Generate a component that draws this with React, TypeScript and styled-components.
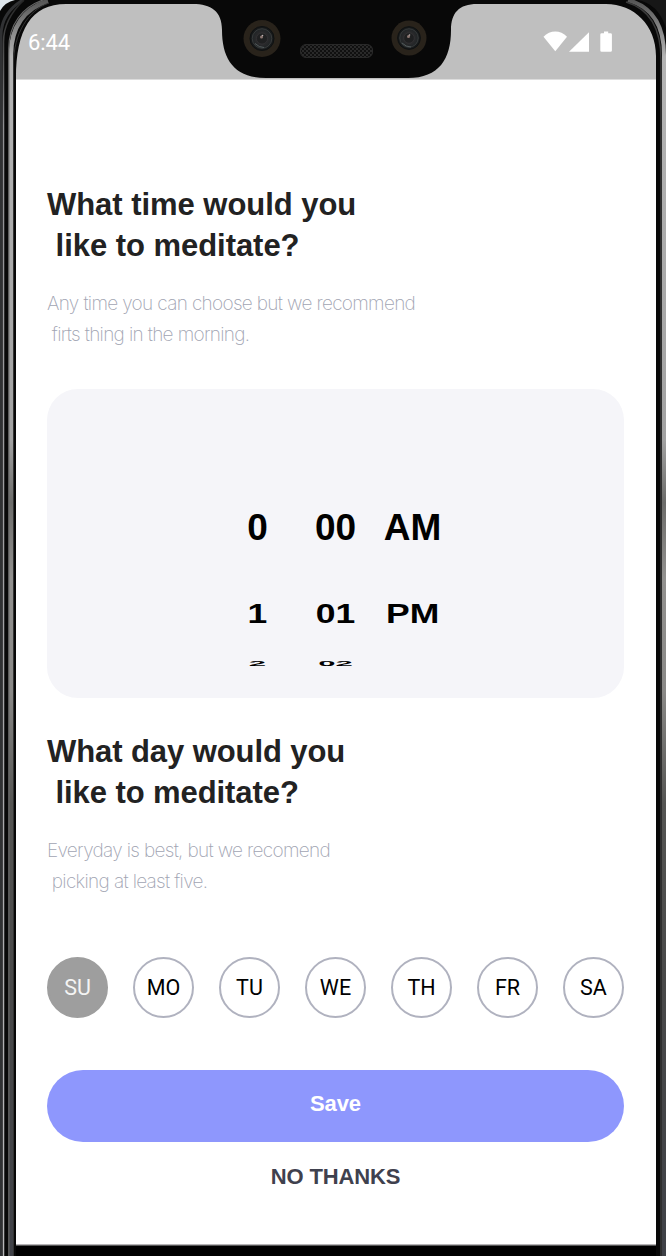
import React, { useState } from "react";
import styled, { createGlobalStyle } from "styled-components";

const GlobalStyle = createGlobalStyle`
  * { box-sizing: border-box; }
  body { margin: 0; background: #000; }
  button { border: 0; padding: 0; margin: 0; background: none; cursor: pointer; }
`;

const sans = `"Liberation Sans", Arial, sans-serif`;

const Phone = styled.div`
  position: relative;
  width: 666px;
  height: 1256px;
  padding: 4px 10px 11px 16px;
  overflow: hidden;
  background: #030303;
`;

const Screen = styled.main`
  display: flex;
  flex-direction: column;
  height: 1241px;
  background: #fff;
`;

const StatusBar = styled.header`
  display: flex;
  justify-content: space-between;
  height: 76px;
  flex: none;
  padding: 27px 43px 0 12px;
  background: #bfbfbf;
  border-bottom: 1px solid #dcdcdc;
`;

const Clock = styled.span`
  font: 400 22px/24px Roboto, sans-serif;
  letter-spacing: -0.1px;
  color: #fff;
`;

const Frame = styled.svg`
  position: absolute;
  inset: 0;
  pointer-events: none;
`;

const Content = styled.div`
  display: flex;
  flex-direction: column;
  padding: 104px 32px 0 31px;
`;

const Title = styled.h1<{ $tracking: number }>`
  margin: 0;
  font: 700 31px/41px ${sans};
  letter-spacing: ${(p) => p.$tracking}px;
  color: #222222;
  white-space: pre;
`;

const Hint = styled.p`
  margin: 22px 0 0;
  font: 250 19px/31px Inter, sans-serif;
  letter-spacing: -0.71px;
  word-spacing: 0.2px;
  color: #a1a4b2;
  white-space: pre;
`;

const Picker = styled.section`
  display: flex;
  justify-content: center;
  height: 309px;
  margin: 39px 0 33px;
  padding: 96px 2px 0 0;
  border-radius: 31px;
  background: #f5f5f9;
`;

const Wheel = styled.div<{ $width: number }>`
  display: flex;
  flex-direction: column;
  align-items: center;
  width: ${(p) => p.$width}px;
`;

const WheelItem = styled.span<{ $x: number; $y: number; $height: number }>`
  height: ${(p) => p.$height}px;
  font: 700 37px/${(p) => p.$height}px ${sans};
  color: #000;
  transform: scale(${(p) => p.$x}, ${(p) => p.$y});
`;

const Days = styled.div`
  display: flex;
  justify-content: space-between;
  margin-top: 60px;
`;

const Day = styled.button<{ $on: boolean }>`
  width: 61px;
  height: 61px;
  border: 2px solid ${(p) => (p.$on ? "#9e9e9e" : "#b0b2bf")};
  border-radius: 50%;
  background: ${(p) => (p.$on ? "#9e9e9e" : "#fff")};
  color: ${(p) => (p.$on ? "#f4f4f4" : "#000")};
  font: 400 21.5px/57px Roboto, sans-serif;
`;

const Save = styled.button`
  height: 72px;
  margin-top: 52px;
  border-radius: 36px;
  background: #8e97fd;
  color: #fff;
  font: 700 22px/68px ${sans};
  letter-spacing: -0.1px;
  padding-bottom: 4px;
`;

const Skip = styled.button`
  align-self: center;
  margin-top: 22px;
  color: #3f414e;
  font: 700 22px/25px ${sans};
  letter-spacing: -0.15px;
`;

function StatusIcons() {
  return (
    <svg width="70" height="22" viewBox="0 0 70 22" fill="#fff">
      <path d="M0.5 5.8C7-1.2 17.500-1.200 24 5.800L12.300 20.300Z" />
      <path d="M26 20.800L46 1.200V20.800Z" />
      <path d="M61 0.400h4.200v1.800h2.300q1.400 0 1.400 1.400v15.800q0 1.400-1.400 1.400h-8.800q-1.400 0-1.400-1.400V3.600q0-1.400 1.400-1.400H61Z" />
    </svg>
  );
}

function Lens({ x, y, r }: { x: number; y: number; r: number }) {
  return (
    <g transform={`translate(${x} ${y})`}>
      <circle r={r} fill="#29231b" />
      <circle r={r * 0.65} fill="#17191a" stroke="#0e1112" />
      <circle r={r * 0.53} fill="url(#glass)" stroke="#444748" strokeWidth="0.7" />
      <circle r={r * 0.3} fill="#1f2021" stroke="#39383a" strokeWidth="0.6" />
      <circle cx="-0.500" cy="-1.500" r="1.500" fill="#8b7671" />
      <circle cx="0.500" cy="-3" r="0.800" fill="#c1b5b4" />
      <path d="M-7 5Q-3 9 2 9" fill="none" stroke="#535b5c" strokeWidth="1" />
    </g>
  );
}

function PhoneFrame() {
  return (
    <Frame width="666" height="1256" viewBox="0 0 666 1256">
      <defs>
        <linearGradient id="rail" gradientUnits="userSpaceOnUse" x1="0" y1="0" x2="0" y2="1256">
          <stop offset="0" stopColor="#555" />
          <stop offset="0.045" stopColor="#b4b4b4" />
          <stop offset="0.350" stopColor="#a2a2a2" />
          <stop offset="0.400" stopColor="#6c6c6a" />
          <stop offset="0.460" stopColor="#92918f" />
          <stop offset="0.550" stopColor="#8a8987" />
          <stop offset="0.640" stopColor="#555553" />
          <stop offset="0.780" stopColor="#494949" />
          <stop offset="1" stopColor="#3f4147" />
        </linearGradient>
        <linearGradient id="edge" gradientUnits="userSpaceOnUse" x1="0" y1="0" x2="0" y2="1256">
          <stop offset="0" stopColor="#252525" />
          <stop offset="0.040" stopColor="#4c4c4c" />
          <stop offset="0.100" stopColor="#8f8f92" />
          <stop offset="1" stopColor="#b7b7b9" />
        </linearGradient>
        <radialGradient id="glass">
          <stop offset="0" stopColor="#393334" />
          <stop offset="1" stopColor="#202426" />
        </radialGradient>
        <pattern id="mesh" width="4" height="4" patternUnits="userSpaceOnUse">
          <rect width="4" height="4" fill="#101010" />
          <circle cx="1" cy="1" r="0.900" fill="#353535" />
          <circle cx="3" cy="3" r="0.900" fill="#353535" />
        </pattern>
      </defs>
      <path
        fillRule="evenodd"
        fill="#080808"
        d="M0 0H666V1256H0ZM16 78C16 30 31 4 66 4H193C211 4 222 11 222 30C222 59 234 78 266 78H408C439 78 451 59 451 30C451 13 459 4 477 4H606C634 4 656 25 656 56V1246H16Z"
      />
      <path d="M1 1256V36Q1 13 23 0" fill="none" stroke="#303133" strokeWidth="3" />
      <path d="M3.500 1256V42Q3.500 19 24 0" fill="none" stroke="url(#edge)" strokeWidth="1.500" />
      <path d="M11 1256V54C11 28 24 8 48 1" fill="none" stroke="url(#rail)" strokeWidth="4.500" />
      <path d="M8.800 1256V48C9 25 22 7 43 0" fill="none" stroke="#666" strokeWidth="1.200" />
      <path d="M13.500 1256V64C13.500 34 28 10 49 3" fill="none" stroke="#333" strokeWidth="1" />
      <path d="M628 0Q664 10 664 55V1256" fill="none" stroke="url(#rail)" strokeWidth="4" />
      <path d="M626 2Q661 12 661 60V1256" fill="none" stroke="#3b3b3b" strokeWidth="1.500" />
      <path d="M637 0Q658 3 666 28V0Z" fill="#171717" />
      <path d="M0 0H15Q5 2 0 11Z" fill="#dce4ea" />
      <rect x="16" y="1245" width="640" height="11" fill="#000" />
      <rect x="16" y="1244" width="640" height="1" fill="#b5b3b5" />
      <rect x="16" y="1245" width="640" height="1" fill="#555" />
      <Lens x={262} y={38.500} r={18.500} />
      <Lens x={409} y={38} r={17.500} />
      <rect x="300.500" y="44.500" width="72" height="13" rx="5.500" fill="url(#mesh)" stroke="#292929" />
    </Frame>
  );
}

const hours = ["0", "1", "2"];
const minutes = ["00", "01", "02"];
const periods = ["AM", "PM"];

/* Rows shrink as they roll away from the selected one. */
const rows = [
  { height: 86, x: 1, y: 1 },
  { height: 86, x: 0.96, y: 0.76 },
  { height: 12, x: 0.84, y: 0.21 },
];

function TimeWheel({ values, width }: { values: string[]; width: number }) {
  return (
    <Wheel $width={width}>
      {values.map((v, i) => (
        <WheelItem key={v} $height={rows[i].height} $x={rows[i].x} $y={rows[i].y}>
          {v}
        </WheelItem>
      ))}
    </Wheel>
  );
}

export default function App() {
  const [selected, setSelected] = useState<string[]>(["SU"]);
  const toggle = (d: string) =>
    setSelected((s) => (s.includes(d) ? s.filter((x) => x !== d) : [...s, d]));

  return (
    <>
      <GlobalStyle />
      <Phone>
        <Screen>
          <StatusBar>
            <Clock>6:44</Clock>
            <StatusIcons />
          </StatusBar>
          <Content>
            <Title $tracking={-0.04}>{"What time would you\n like to meditate?"}</Title>
            <Hint>{"Any time you can choose but we recommend\n firts thing in the morning."}</Hint>
            <Picker>
              <TimeWheel values={hours} width={78} />
              <TimeWheel values={minutes} width={78} />
              <TimeWheel values={periods} width={76} />
            </Picker>
            <Title $tracking={-0.08}>{"What day would you\n like to meditate?"}</Title>
            <Hint>{"Everyday is best, but we recomend\n picking at least five."}</Hint>
            <Days>
              {["SU", "MO", "TU", "WE", "TH", "FR", "SA"].map((d) => (
                <Day key={d} $on={selected.includes(d)} onClick={() => toggle(d)}>
                  {d}
                </Day>
              ))}
            </Days>
            <Save>Save</Save>
            <Skip>NO THANKS</Skip>
          </Content>
        </Screen>
        <PhoneFrame />
      </Phone>
    </>
  );
}
